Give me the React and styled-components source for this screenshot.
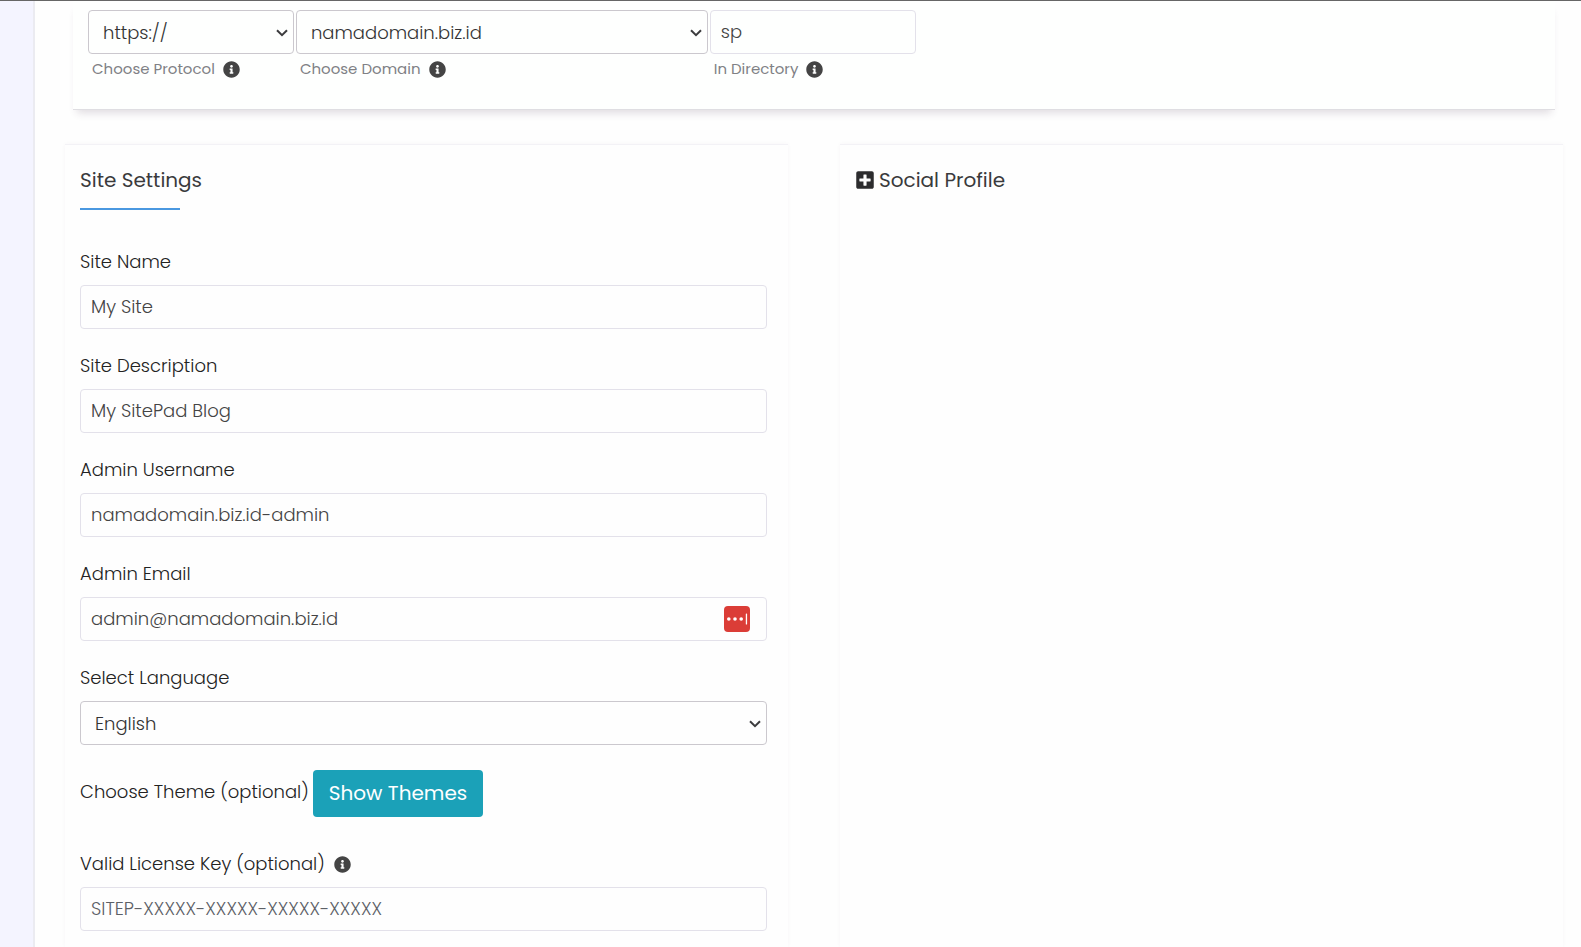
import React, { useState } from 'react';
import styled, { createGlobalStyle } from 'styled-components';
import { FaInfoCircle, FaPlusSquare } from 'react-icons/fa';

const GlobalStyle = createGlobalStyle`
  *, *::before, *::after {
    box-sizing: border-box;
  }

  body {
    margin: 0;
    font-family: Poppins, Inter, 'Open Sans', sans-serif;
    font-size: 18px;
    font-weight: 300;
    line-height: 26px;
    color: #222;
    background-color: #fefefe;
  }
`;

const Page = styled.div`
  display: flex;
  min-height: 100vh;
  border-top: 1px solid #666;
`;

const Sidebar = styled.aside`
  flex: none;
  width: 35px;
  background-color: #f4f4ff;
  border-right: 2px solid #ebebf1;
`;

const Main = styled.main`
  flex: 1;
  min-width: 0;
  display: flex;
  flex-direction: column;
  gap: 34px;
  padding: 0 18px 0 30px;
`;

const UrlCard = styled.section`
  margin: 0 8px;
  padding: 9px 15px 28px;
  background-color: #fefffe;
  border-bottom: 1px solid #dfdee2;
  box-shadow: 0 7px 8px -4px rgba(60, 40, 70, 0.16);
`;

const UrlRow = styled.div`
  display: grid;
  grid-template-columns: 1fr 2fr 1fr;
  column-gap: 2px;
  width: 57%;
`;

const controlStyles = `
  display: block;
  width: 100%;
  height: 44px;
  font: inherit;
  background-color: transparent;
  border-radius: 4px;
`;

const Input = styled.input`
  ${controlStyles}
  padding: 5px 10px 7px;
  color: #444;
  border: 1px solid #e3e1ea;

  &::placeholder {
    color: #5c6066;
    opacity: 1;
  }

  &:focus {
    outline: none;
    border-color: #4a98e0;
  }
`;

const SelectWrap = styled.div`
  position: relative;
`;

const StyledSelect = styled.select`
  ${controlStyles}
  padding: 7px 24px 5px 14px;
  color: #333;
  border: 1px solid #cbc8ce;
  appearance: none;
`;

const Chevron = styled.svg`
  position: absolute;
  top: 19px;
  right: 6px;
  width: 12px;
  height: 8px;
  pointer-events: none;
`;

const HelpLabel = styled.label`
  display: flex;
  align-items: center;
  gap: 8px;
  margin-top: 3px;
  padding-left: 4px;
  font-size: 15px;
  font-weight: 400;
  line-height: 24px;
  color: #808185;
`;

const InfoIcon = styled(FaInfoCircle)`
  flex: none;
  width: 17px;
  height: 17px;
  color: #444;
`;

const Columns = styled.div`
  flex: 1;
  display: grid;
  grid-template-columns: 1fr 1fr;
  gap: 52px;
`;

const Card = styled.section`
  padding: 20px 21px 16px 15px;
  border-top: 1px solid #f3f2f6;
  box-shadow: 0 0 4px rgba(90, 40, 110, 0.04);
`;

const CardTitle = styled.h2`
  display: flex;
  align-items: center;
  gap: 4px;
  margin: 0;
  font-size: 20px;
  font-weight: 400;
  line-height: 30px;
  color: #3a3a3c;
`;

const PlusIcon = styled(FaPlusSquare)`
  width: 20px;
  height: 20px;
  color: #2c2c2e;
`;

const Underline = styled.div`
  width: 100px;
  height: 2px;
  margin: 13px 0 39px;
  background-color: #4a98e0;
`;

const Field = styled.div`
  margin-bottom: 24px;

  &:last-child {
    margin-bottom: 0;
  }
`;

const Label = styled.label`
  display: flex;
  align-items: center;
  gap: 9px;
  margin-bottom: 10px;
`;

const InputWrap = styled.div`
  position: relative;
`;

const FillButton = styled.button`
  position: absolute;
  top: 9px;
  right: 17px;
  width: 26px;
  height: 26px;
  padding: 0;
  border: none;
  background: none;
  cursor: pointer;

  svg {
    display: block;
  }
`;

const ThemeRow = styled.div`
  display: flex;
  align-items: center;
  gap: 4px;
  margin: 25px 0 34px;
`;

const ThemeLabel = styled.span`
  padding-bottom: 3px;
`;

const ThemeButton = styled.button`
  padding: 8px 16px;
  font: inherit;
  font-size: 20px;
  font-weight: 400;
  line-height: 31px;
  color: #fff;
  background-color: #1ba1b8;
  border: none;
  border-radius: 4px;
  cursor: pointer;
`;

const PasswordManagerIcon = () => (
  <svg width="26" height="26" viewBox="0 0 26 26" aria-hidden="true">
    <rect width="26" height="26" rx="4" fill="#db3d37" />
    <circle cx="4.8" cy="13" r="1.8" fill="#fff" />
    <circle cx="11" cy="13" r="1.8" fill="#fff" />
    <circle cx="17.2" cy="13" r="1.8" fill="#fff" />
    <rect x="21.8" y="7.5" width="1.3" height="11" rx="0.6" fill="#fff" />
  </svg>
);

const Select = ({ children, ...props }) => (
  <SelectWrap>
    <StyledSelect {...props}>{children}</StyledSelect>
    <Chevron viewBox="0 0 12 8" aria-hidden="true">
      <path d="M1 1.2 6 6.2 11 1.2" fill="none" stroke="#3c3c3e" strokeWidth="2" />
    </Chevron>
  </SelectWrap>
);

const textFields = [
  { name: 'siteName', label: 'Site Name' },
  { name: 'siteDescription', label: 'Site Description' },
  { name: 'adminUsername', label: 'Admin Username' },
  { name: 'adminEmail', label: 'Admin Email', type: 'email', autofill: true },
];

const App = () => {
  const [values, setValues] = useState({
    protocol: 'https://',
    domain: 'namadomain.biz.id',
    directory: 'sp',
    siteName: 'My Site',
    siteDescription: 'My SitePad Blog',
    adminUsername: 'namadomain.biz.id-admin',
    adminEmail: 'admin@namadomain.biz.id',
    language: 'English',
    license: '',
  });

  const bind = (name) => ({
    id: name,
    name,
    value: values[name],
    onChange: (e) => setValues({ ...values, [name]: e.target.value }),
  });

  return (
    <>
      <GlobalStyle />
      <Page>
        <Sidebar />
        <Main>
          <UrlCard>
            <UrlRow>
              <div>
                <Select {...bind('protocol')}>
                  <option>https://</option>
                  <option>http://</option>
                </Select>
                <HelpLabel htmlFor="protocol">
                  Choose Protocol <InfoIcon />
                </HelpLabel>
              </div>
              <div>
                <Select {...bind('domain')}>
                  <option>namadomain.biz.id</option>
                </Select>
                <HelpLabel htmlFor="domain">
                  Choose Domain <InfoIcon />
                </HelpLabel>
              </div>
              <div>
                <Input type="text" {...bind('directory')} />
                <HelpLabel htmlFor="directory">
                  In Directory <InfoIcon />
                </HelpLabel>
              </div>
            </UrlRow>
          </UrlCard>

          <Columns>
            <Card>
              <CardTitle>Site Settings</CardTitle>
              <Underline />

              {textFields.map((field) => (
                <Field key={field.name}>
                  <Label htmlFor={field.name}>{field.label}</Label>
                  <InputWrap>
                    <Input type={field.type || 'text'} {...bind(field.name)} />
                    {field.autofill && (
                      <FillButton type="button" aria-label="Fill from password manager">
                        <PasswordManagerIcon />
                      </FillButton>
                    )}
                  </InputWrap>
                </Field>
              ))}

              <Field>
                <Label htmlFor="language">Select Language</Label>
                <Select {...bind('language')}>
                  <option>English</option>
                </Select>
              </Field>

              <ThemeRow>
                <ThemeLabel>Choose Theme (optional)</ThemeLabel>
                <ThemeButton type="button">Show Themes</ThemeButton>
              </ThemeRow>

              <Field>
                <Label htmlFor="license">
                  Valid License Key (optional) <InfoIcon />
                </Label>
                <Input type="text" placeholder="SITEP-XXXXX-XXXXX-XXXXX-XXXXX" {...bind('license')} />
              </Field>
            </Card>

            <Card>
              <CardTitle>
                <PlusIcon /> Social Profile
              </CardTitle>
            </Card>
          </Columns>
        </Main>
      </Page>
    </>
  );
};

export default App;
